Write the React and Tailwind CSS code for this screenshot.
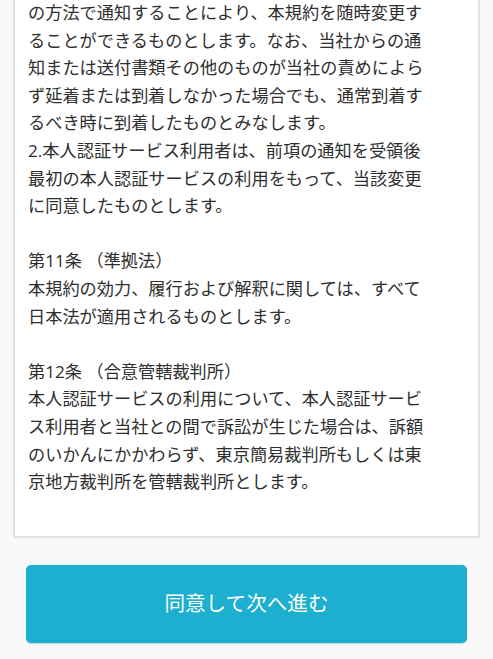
const lines = [
  'の方法で通知することにより、本規約を随時変更す',
  'ることができるものとします。なお、当社からの通',
  '知または送付書類その他のものが当社の責めによら',
  'ず延着または到着しなかった場合でも、通常到着す',
  'るべき時に到着したものとみなします。',
  '2.本人認証サービス利用者は、前項の通知を受領後',
  '最初の本人認証サービスの利用をもって、当該変更',
  'に同意したものとします。',
  '',
  '第11条 （準拠法）',
  '本規約の効力、履行および解釈に関しては、すべて',
  '日本法が適用されるものとします。',
  '',
  '第12条 （合意管轄裁判所）',
  '本人認証サービスの利用について、本人認証サービ',
  'ス利用者と当社との間で訴訟が生じた場合は、訴額',
  'のいかんにかかわらず、東京簡易裁判所もしくは東',
  '京地方裁判所を管轄裁判所とします。',
];

export default function App() {
  return (
    <div
      className="min-h-screen bg-[#f9f9f9] flex flex-col overflow-hidden"
      style={{ fontFamily: '"Open Sans", "Noto Sans CJK JP", sans-serif' }}
    >
      <div className="mx-[13px] bg-white border-2 border-t-0 border-[#e2e2e2] pl-[13px] pr-[10px] pb-[40px]">
        <div className="-mt-[1px] text-[17.2px] leading-[27.6px] text-[#2e2e2e]">
          {lines.map((line, i) => (
            <div key={i} className="whitespace-nowrap h-[27.6px]">
              {line}
            </div>
          ))}
        </div>
      </div>

      <div className="px-[26px] pt-[27px] pb-[17px]">
        <button className="w-full h-[78px] rounded-[5px] bg-[#1cafcf] text-white text-[20.6px] shadow-[0_1px_1px_rgba(0,0,0,0.15)]">
          同意して次へ進む
        </button>
      </div>
    </div>
  );
}
